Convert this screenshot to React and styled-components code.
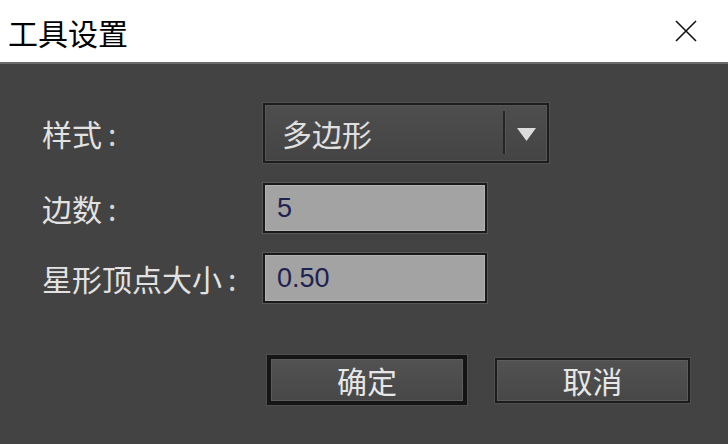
import React from "react";
import styled, { createGlobalStyle } from "styled-components";

const GlobalStyle = createGlobalStyle`
  html, body {
    margin: 0;
    padding: 0;
    background: #434343;
  }
  * {
    box-sizing: border-box;
  }
`;

const CJK = `"Noto Sans CJK SC", "Noto Sans", sans-serif`;

const Window = styled.div`
  width: 728px;
  height: 444px;
  display: flex;
  flex-direction: column;
  background: #434343;
  overflow: hidden;
`;

const TitleBar = styled.div`
  height: 64px;
  flex: none;
  display: flex;
  align-items: center;
  justify-content: space-between;
  padding: 0 30px 0 8px;
  background: #ffffff;
  border-bottom: 2px solid #6b6b6b;
`;

const Title = styled.div`
  font-family: ${CJK};
  font-size: 30px;
  line-height: 1;
  color: #000;
  margin-top: 2px;
`;

const CloseButton = styled.button`
  width: 24px;
  height: 24px;
  padding: 0;
  border: none;
  background: transparent;
  display: flex;
  align-items: center;
  justify-content: center;
`;

const Body = styled.div`
  flex: 1;
  padding: 39px 0 0 42px;
  display: flex;
  flex-direction: column;
`;

const Form = styled.div`
  display: grid;
  grid-template-columns: 221px auto;
  row-gap: 20px;
  align-items: center;
`;

const Label = styled.div`
  font-family: ${CJK};
  font-size: 30px;
  line-height: 1;
  color: #e2e2e2;
  white-space: nowrap;
`;

const Colon = styled.span`
  margin-left: 6px;
  color: #d6d6d6;
`;

const Select = styled.div`
  width: 286px;
  height: 60px;
  display: flex;
  align-items: stretch;
  border: 2px solid #1d1d1d;
  box-shadow: 0 0 0 1px #505050, inset 0 0 0 1px #565656;
  background: linear-gradient(#4e4e4e, #444444);
`;

const SelectValue = styled.div`
  flex: 1;
  display: flex;
  align-items: center;
  padding-left: 17px;
  font-family: ${CJK};
  font-size: 30px;
  color: #e0e0e0;
`;

const Divider = styled.div`
  width: 2px;
  margin: 6px 0 7px;
  background: #262626;
  box-shadow: 1px 0 0 #555555;
`;

const ArrowBox = styled.div`
  width: 42px;
  display: flex;
  align-items: center;
  justify-content: center;
  padding-top: 2px;
`;

const Field = styled.div`
  width: 224px;
  height: 50px;
  display: flex;
  align-items: center;
  padding-left: 12px;
  border: 2px solid #1a1a1a;
  box-shadow: 0 0 0 1px #585858, inset 0 0 0 1px #b2b2b2;
  background: #a3a3a3;
  font-family: "Liberation Sans", Arial, sans-serif;
  font-size: 27px;
  color: #1e2250;
`;

const ButtonRow = styled.div`
  display: flex;
  align-items: center;
  gap: 28px;
  height: 50px;
  margin-top: 52px;
  padding-left: 225px;
`;

const Button = styled.button`
  width: ${(p) => (p.$primary ? "200px" : "195px")};
  height: ${(p) => (p.$primary ? "50px" : "45px")};
  padding: 0;
  border: ${(p) => (p.$primary ? "4px solid #151515" : "2px solid #1c1c1c")};
  box-shadow: 0 0 0 1px #4e4e4e, inset 0 0 0 1px #5c5c5c;
  background: linear-gradient(#525252, #474747);
  font-family: ${CJK};
  font-size: 30px;
  line-height: 1;
  color: #e6e6e6;
  display: flex;
  align-items: center;
  justify-content: center;
`;

export default function App() {
  return (
    <>
      <GlobalStyle />
      <Window>
        <TitleBar>
          <Title>工具设置</Title>
          <CloseButton>
            <svg width="22" height="22" viewBox="0 0 22 22">
              <path
                d="M1 1 L21 21 M21 1 L1 21"
                stroke="#111"
                strokeWidth="1.6"
                fill="none"
              />
            </svg>
          </CloseButton>
        </TitleBar>
        <Body>
          <Form>
            <Label>
              样式<Colon>:</Colon>
            </Label>
            <Select>
              <SelectValue>多边形</SelectValue>
              <Divider />
              <ArrowBox>
                <svg width="19" height="13" viewBox="0 0 19 13">
                  <path d="M0 0 H19 L9.5 13 Z" fill="#dcdcdc" />
                </svg>
              </ArrowBox>
            </Select>
            <Label>
              边数<Colon>:</Colon>
            </Label>
            <Field>5</Field>
            <Label>
              星形顶点大小<Colon>:</Colon>
            </Label>
            <Field>0.50</Field>
          </Form>
          <ButtonRow>
            <Button $primary>确定</Button>
            <Button>取消</Button>
          </ButtonRow>
        </Body>
      </Window>
    </>
  );
}
